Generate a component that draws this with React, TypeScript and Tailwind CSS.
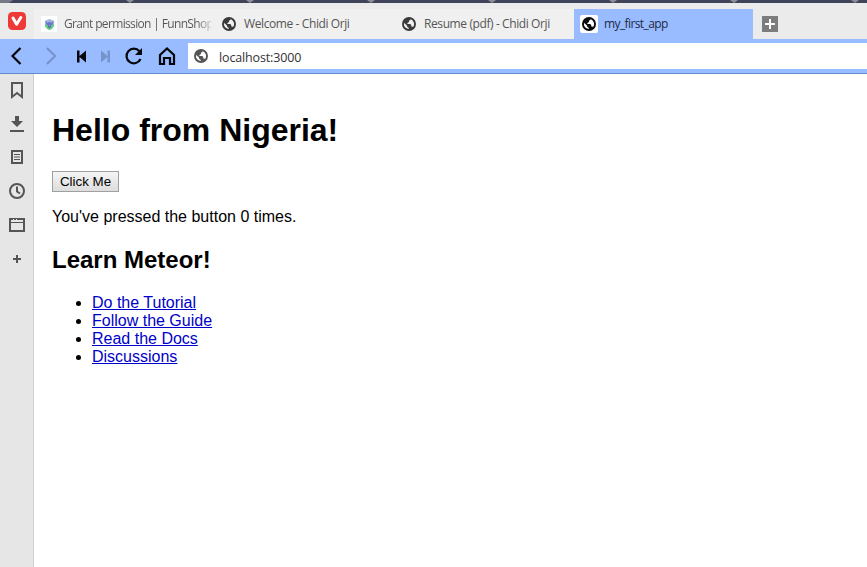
import { useState } from "react";

function Globe({ className }: { className: string }) {
  return (
    <svg viewBox="0 0 14 14" className={`h-[14px] w-[14px] shrink-0 ${className}`}>
      <circle cx="7" cy="7" r="6.05" fill="none" stroke="currentColor" strokeWidth="1.9" />
      <path
        fill="currentColor"
        d="M3 2.600 6.200 1 8.600 1.200 8.500 2.800 7 3.700V5L5.400 5.900V7H8.300L9.200 8v1.600h1.300L11.300 11 9 12.700H6.800V11L5 9.500V8.600L1.600 5.400z"
      />
    </svg>
  );
}

const bookmarks = ["Do the Tutorial", "Follow the Guide", "Read the Docs", "Discussions"];
const notches = [130, 250, 371, 492, 613, 734, 855];

function TopStrip() {
  return (
    <svg className="block h-[3px] w-full shrink-0" viewBox="0 0 867 3">
      <rect width="867" height="3" fill="#40445b" />
      <path d="M0 0h13L9 3H0z" fill="#777a87" />
      {notches.map((x) => (
        <path key={x} d={`M${x - 4} 0h8l-4 3z`} fill="#8b8d98" />
      ))}
    </svg>
  );
}

function Tab({ title }: { title: string }) {
  return (
    <div className="flex w-[180px] items-center bg-[#f0f0f0] pl-2 text-[#555]">
      <Globe className="text-[#3b3b3b]" />
      <span className="ml-2 whitespace-nowrap tracking-[-0.4px]">{title}</span>
    </div>
  );
}

function Tabs() {
  return (
    <div className="flex h-9 shrink-0 bg-[#ebebeb] pt-1.5 font-['Open_Sans',sans-serif] text-[12px]">
      <div className="w-[34px] shrink-0 pl-2 pt-[3px]">
        <svg viewBox="0 0 18 18" className="h-[18px] w-[18px]">
          <rect width="18" height="18" rx="4.5" fill="#ef3939" />
          <path d="M5 6 8.600 12.200 12.800 5.500" fill="none" stroke="#fff" strokeWidth="3" strokeLinecap="round" strokeLinejoin="round" />
        </svg>
      </div>
      <div className="flex w-[180px] shrink-0 items-center bg-[#f0f0f0] pl-[7px] text-[#555]">
        <div className="flex h-4 w-4 shrink-0 items-center justify-center bg-white">
          <svg viewBox="0 0 12 12" className="h-[11px] w-[11px]">
            <path d="M1 2 6 0l5 2v4q0 4-5 6Q1 10 1 6z" fill="#a3b5dd" />
            <path d="M1.500 2.500 4 4l2-1 2 1 2.500-1.500L9 6.500H3z" fill="#6577c8" />
            <path d="M1 5.500 4 7h4l3-1.500Q11 10 6 12 1 10 1 5.500z" fill="#58d47a" />
            <path d="m4 6 2 1.500L8 6 7.500 9 6 10 4.500 9z" fill="#6b63bd" />
          </svg>
        </div>
        <span className="ml-[7px] w-[147px] whitespace-nowrap bg-linear-to-r from-[#555] from-90% to-[#55555533] bg-clip-text tracking-[-0.65px] text-transparent">
          Grant permission | FunnShop
        </span>
      </div>
      <Tab title="Welcome - Chidi Orji" />
      <Tab title="Resume (pdf) - Chidi Orji" />
      <div className="flex w-[179px] items-center bg-[#99bbff] pl-1.5 text-[#1d2a45]">
        <div className="flex h-[18px] w-[18px] items-center justify-center rounded-xs bg-white">
          <Globe className="text-[#0b0b0b]" />
        </div>
        <span className="ml-1.5 tracking-[-0.6px]">my_first_app</span>
      </div>
      <svg viewBox="0 0 16 16" className="ml-[9px] mt-[7px] h-4 w-4">
        <rect width="16" height="16" fill="#7c7c7c" />
        <path d="M3 8h10M8 3v10" stroke="#fff" strokeWidth="2" />
      </svg>
    </div>
  );
}

function Toolbar() {
  return (
    <div className="flex h-[35px] shrink-0 border-b border-[#6488cf] bg-[#99bbff]">
      <svg viewBox="0 0 188 34" className="h-[34px] w-[188px] shrink-0" fill="none">
        <path d="m20.5 9-8 8 8 8" stroke="#05070b" strokeWidth="2.2" />
        <path d="m47 9 8 8-8 8" stroke="#7693cb" strokeWidth="2.2" />
        <path d="M77 11.500h2.500v5.500L86 11.500v12L79.500 18v5.500H77z" fill="#05070b" />
        <path d="M110 11.500h-2.500V17L101 11.500v12l6.500-5.500v5.500h2.500z" fill="#7693cb" />
        <path d="M139.400 12.300A7.300 7.300 0 1 0 140.500 20" stroke="#05070b" strokeWidth="2.200" />
        <path d="M142 9v7h-7z" fill="#05070b" />
        <path d="M160 25v-9l7-6.500 7 6.500v9h-4v-6h-6v6z" stroke="#05070b" strokeWidth="2.200" />
      </svg>
      <div className="mb-1 mt-1 flex flex-1 items-center bg-white pl-1.5 font-['Open_Sans',sans-serif] text-[12.5px] text-[#333]">
        <Globe className="text-[#555]" />
        <span className="ml-[11px] pt-1 tracking-[-0.15px]">localhost:3000</span>
      </div>
    </div>
  );
}

function Sidebar() {
  return (
    <div className="w-[34px] shrink-0 border-r border-[#cfcfcf] bg-[#e6e6e6]">
      <svg viewBox="0 0 33 200" className="h-[200px] w-[33px]" fill="none" stroke="#555" strokeWidth="2">
        <path d="M12 9h10v14l-5-4-5 4z" />
        <path d="M10 57h14" />
        <path d="M15 42h4v5h4l-6 6-6-6h4z" fill="#555" stroke="none" />
        <path d="M12 77h10v12H12z" />
        <path d="M14 80.500h6M14 83h6M14 85.500h6" strokeWidth="1" />
        <circle cx="17" cy="117" r="7" />
        <path d="M17 112.500v5l3 2" />
        <path d="M10 145h14v12H10z" />
        <path d="M10 148.500h14" strokeWidth="1" />
        <path d="M13 146h1m2 0h1" stroke="#e6e6e6" />
        <path d="M13 185h8M17 181v8" />
      </svg>
    </div>
  );
}

export default function App() {
  const [count, setCount] = useState(0);
  return (
    <div className="flex h-[567px] w-[867px] flex-col overflow-hidden bg-white font-['Liberation_Sans',Arial,sans-serif] text-base text-black">
      <TopStrip />
      <Tabs />
      <Toolbar />
      <div className="flex flex-1">
        <Sidebar />
        <main className="pl-[18px] pt-[38px]">
          <h1 className="text-[32px] font-bold leading-[37px]">Hello from Nigeria!</h1>
          <button
            onClick={() => setCount(count + 1)}
            className="mt-[22px] block h-[21px] w-[67px] whitespace-nowrap border border-[#a0a0a0] bg-linear-to-b from-[#f5f5f5] to-[#dddddd] text-[13.333px] leading-[19px]"
          >
            Click Me
          </button>
          <p className="mt-4 leading-[18px]">You've pressed the button {count} times.</p>
          <h2 className="mt-5 text-2xl font-bold leading-[28px]">Learn Meteor!</h2>
          <ul className="mt-5 list-disc pl-10 leading-[18px]">
            {bookmarks.map((b) => (
              <li key={b}>
                <a href="#" className="text-[#0000c8] underline">{b}</a>
              </li>
            ))}
          </ul>
        </main>
      </div>
    </div>
  );
}
